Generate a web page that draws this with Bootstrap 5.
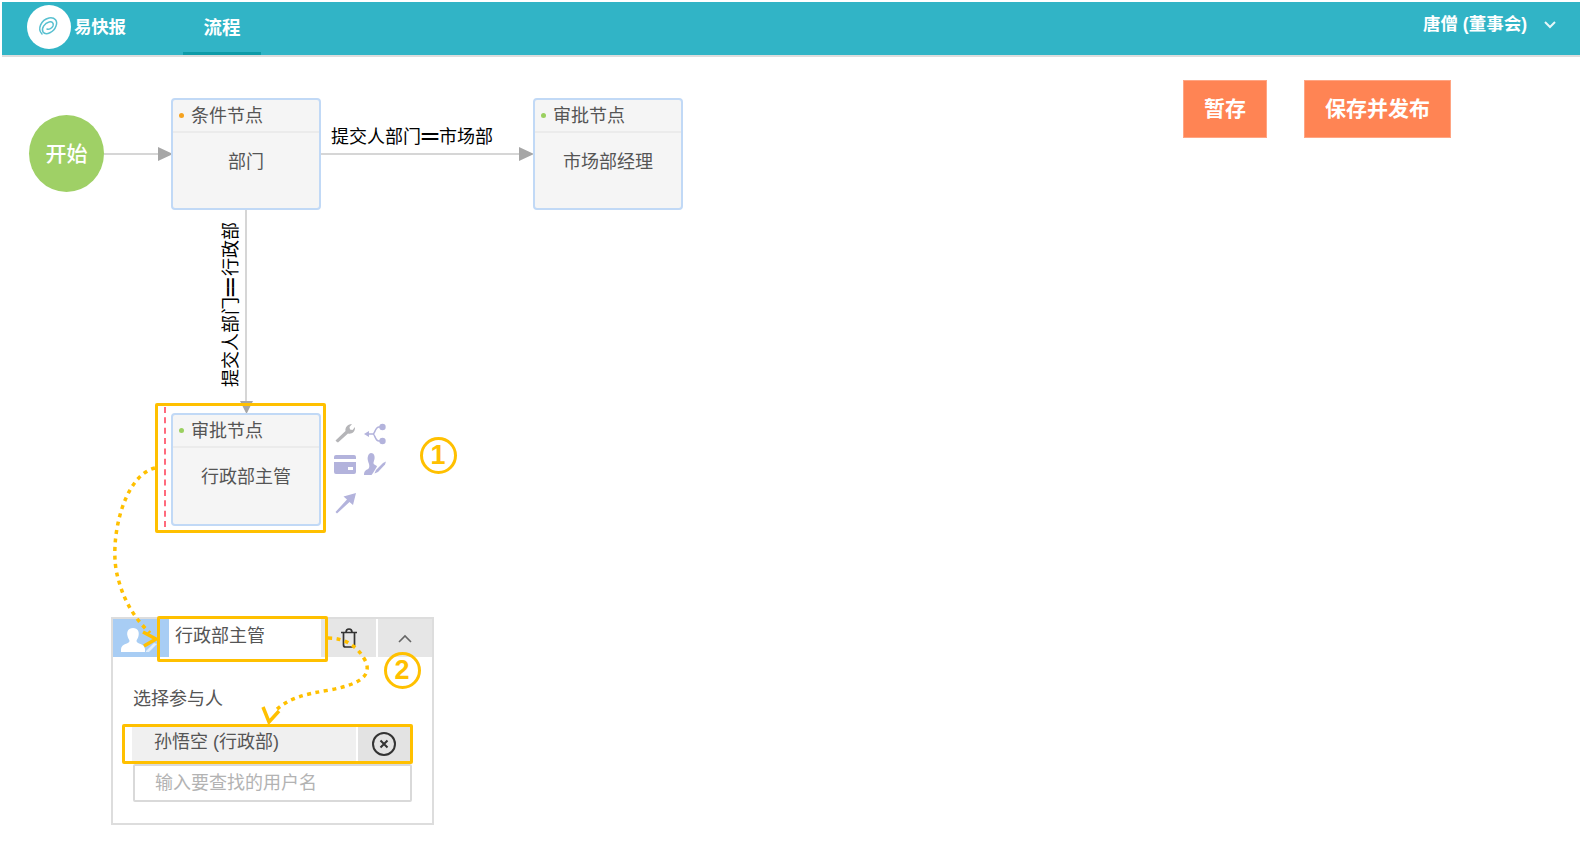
<!DOCTYPE html>
<html lang="zh">
<head>
<meta charset="utf-8">
<title>流程</title>
<link href="https://cdn.jsdelivr.net/npm/bootstrap@5.3.0/dist/css/bootstrap.min.css" rel="stylesheet">
<style>
html,body{height:100%;overflow:hidden}
body{background:#fff;color:#555;font-family:"Liberation Sans","Noto Sans CJK SC",sans-serif;font-size:18px}
.page-wrap{position:relative;width:1580px;height:844px;padding:2px 0 0 2px}
.topbar{height:55px;background:#31b4c6;border-bottom:2px solid #ddd;color:#fff;padding:0;flex-wrap:nowrap;align-items:stretch}
.logo-round{width:44px;height:44px;border-radius:50%;background:#fff;margin:3px 3px 0 25px}
.logo-word{font-size:17.5px;font-weight:700;line-height:51px;width:56px;letter-spacing:-.3px}
.nav-tab{width:78px;margin-left:53px;height:53px;line-height:52px;text-align:center;font-weight:700;font-size:18.5px;color:#fff;border-bottom:3px solid #0e9ba8}
.user-name{font-size:17.5px;font-weight:700;line-height:45px;margin-right:9px}
.user-caret{margin:19px 24px 0 8px}
.action-row{padding:23px 129px 0 0;gap:37px}
.action-btn{background:#ff8454;color:#fff;border:1px solid #ffa583;border-radius:0;height:58px;font-size:21px;font-weight:700;padding:0 20px;line-height:50px}
.wire-layer{position:absolute;left:0;top:0;width:1580px;height:844px;pointer-events:none}
.flow-node{position:absolute;width:150px;background:#f5f5f5;border:2px solid #c1d9f6;border-radius:4px}
.node-head{height:33px;border-bottom:2px solid #ebebeb;line-height:32px;padding-left:18px;position:relative;color:#555}
.node-dot{position:absolute;left:6px;top:13px;width:5px;height:5px;border-radius:50%}
.dot-orange{background:#f5a21e}
.dot-green{background:#9ad05f}
.node-body{text-align:center;line-height:26px;padding-top:16px;color:#555}
.start-dot{position:absolute;left:29px;top:115px;width:75px;height:77px;border-radius:50%;background:#9fd066;color:#fff;font-size:21px;font-weight:500}
.edge-text{position:absolute;color:#000;font-size:18px;line-height:24px;white-space:nowrap}
.edge-eq{letter-spacing:-3px;margin-inline-end:3px;font-weight:700}
.edge-h{left:331px;top:125px}
.edge-v{left:219px;top:222px;writing-mode:vertical-rl;text-orientation:sideways;transform:rotate(180deg)}
.edge-v .edge-eq{letter-spacing:-1.5px}
.mark-box{position:absolute;border:3px solid #ffc000;border-radius:2px;pointer-events:none}
.mark-one{left:155px;top:403px;width:171px;height:130px}
.mark-two{left:157px;top:616px;width:171px;height:46px}
.mark-three{left:122px;top:724px;width:291px;height:40px}
.red-rule{position:absolute;left:164px;top:407px;height:120px;border-left:2px dashed #ff6b7d}
.tool-icon{position:absolute}
.round-num{position:absolute;width:37px;height:37px;border:3px solid #ffc000;border-radius:50%;color:#ffc000;font-weight:700;font-size:27px;line-height:30px;text-align:center}
.prop-panel{position:absolute;left:111px;top:617px;width:323px;height:208px;border:2px solid #ddd;background:#fff}
.panel-head{height:38px}
.head-avatar{width:56px;background:#a8cdf4;padding:4px 0 0 6px}
.head-input{flex:1;background:#fff;font-size:18px;line-height:35px;padding-left:6px;color:#555}
.head-act{width:55px;background:#e6e6e6}
.head-act+.head-act{margin-left:2px}
.head-act-last{width:54px}
.panel-label{margin:0;padding:29px 0 0 20px;line-height:26px;color:#555}
.tag-row{margin:15px 22px 0 19px;height:34px;background:#f0f0f0}
.tag-name{flex:1;padding-left:22px;line-height:31px;color:#555}
.tag-close{width:54px;background:#e3e3e3;border-left:2px solid #fff}
.who-input.form-control{display:block;margin:3px 20px 0 20px;width:279px;height:38px;border:2px solid #d9d9d9;border-radius:2px;font-size:18px;padding:1px 20px 0;color:#555}
.who-input.form-control::placeholder{color:#b3b3b3;opacity:1}
</style>
</head>
<body>
<div class="page-wrap">
  <nav class="navbar topbar d-flex">
    <div class="logo-round d-flex align-items-center justify-content-center">
      <svg width="26" height="26" viewBox="0 0 26 26" fill="none" stroke="#58c0d0" stroke-width="1.5" stroke-linecap="round"><path d="M6 20C1 15 5 6 13 4c6-1 9 3 7 8-2 6-10 10-13 6-2-4 2-9 6-10 3-1 5 1 4 4-1 2-4 4-6 3"/></svg>
    </div>
    <span class="logo-word">易快报</span>
    <a class="nav-tab text-decoration-none">流程</a>
    <div class="ms-auto d-flex align-items-start">
      <span class="user-name">唐僧 (董事会)</span>
      <svg class="user-caret" width="12" height="8" viewBox="0 0 12 8" fill="none" stroke="#e6f7f9" stroke-width="2"><path d="M1 1l5 5 5-5"/></svg>
    </div>
  </nav>

  <div class="d-flex justify-content-end action-row">
    <button type="button" class="btn action-btn">暂存</button>
    <button type="button" class="btn action-btn">保存并发布</button>
  </div>

  <svg class="wire-layer" viewBox="0 0 1580 844" fill="none">
    <path d="M104 154H160M320 154H522M246 210V403" stroke="#d6d6d6" stroke-width="2"/>
    <path d="M158 147L173 154L158 161ZM519 147L534 154L519 161ZM240 401H253L246.500 414Z" fill="#a6a6a6"/>
  </svg>

  <div class="start-dot d-flex align-items-center justify-content-center">开始</div>

  <div class="flow-node" style="left:171px;top:98px;height:112px">
    <div class="node-head"><i class="node-dot dot-orange"></i>条件节点</div>
    <div class="node-body">部门</div>
  </div>
  <div class="flow-node" style="left:533px;top:98px;height:112px">
    <div class="node-head"><i class="node-dot dot-green"></i>审批节点</div>
    <div class="node-body">市场部经理</div>
  </div>
  <div class="flow-node" style="left:171px;top:413px;height:113px">
    <div class="node-head"><i class="node-dot dot-green"></i>审批节点</div>
    <div class="node-body">行政部主管</div>
  </div>

  <div class="edge-text edge-h">提交人部门<span class="edge-eq">==</span>市场部</div>
  <div class="edge-text edge-v">提交人部门<span class="edge-eq">==</span>行政部</div>

  <div class="red-rule"></div>

  <svg class="tool-icon" style="left:335px;top:423px" width="22" height="20" viewBox="0 0 22 20" fill="#b5b5b8"><path d="M2 19l-1.500-1.500L10.500 8C10 5 12 1 17 1l-2.500 3 .5 2.500 2.500.5L20 4c.5 5-3.500 7.500-7 6.500L3 19.500z"/></svg>
  <svg class="tool-icon" style="left:363px;top:423px" width="24" height="22" viewBox="0 0 24 22" fill="none"><path d="M5 11H10C12 11 12 4 16 4H18M10 11C12 11 12 18 16 18H18" stroke="#b3b3dc" stroke-width="1.500"/><path d="M1 11L6 8V14Z" fill="#b3b3dc"/><circle cx="19.500" cy="4" r="3.200" fill="#b3b3dc"/><circle cx="19.500" cy="18" r="3.200" fill="#b3b3dc"/></svg>
  <svg class="tool-icon" style="left:334px;top:455px" width="22" height="19" viewBox="0 0 22 19" fill="#b3b3dc"><path d="M2 0H20A2 2 0 0 1 22 2V4H0V2A2 2 0 0 1 2 0ZM0 7H22V17A2 2 0 0 1 20 19H2A2 2 0 0 1 0 17ZM14 12V15H19V12Z"/></svg>
  <svg class="tool-icon" style="left:364px;top:453px" width="23" height="22" viewBox="0 0 23 22" fill="#b3b3dc"><path d="M7 0c3 0 4 3 3.500 6-.5 2-1 3-1 4 0 2 3 2 3.500 3.500L9 20c-.5.8-1 1.500-1.500 2H0c0-4 2-5 4-6 1.500-.8 1.500-3 1-5C4 8 3 6 4 3c.5-2 2-3 3-3z"/><path d="M12 17l7-7 3-1.500-1 3-7 7.500-3.500 1.500z"/></svg>
  <svg class="tool-icon" style="left:335px;top:492px" width="22" height="22" viewBox="0 0 22 22" fill="#b3b3dc"><path d="M21 1L18 13L14.500 10L2 21.500L.5 20L12 7.500L8.500 4.500Z"/></svg>

  <div class="round-num" style="left:419.500px;top:436.500px">1</div>

  <section class="prop-panel">
    <div class="panel-head d-flex">
      <div class="head-avatar d-flex align-items-center">
        <svg width="40" height="26" viewBox="0 0 40 26" fill="#fff"><path d="M14 1c5 0 6.500 4 5.500 8-.5 2.500-2 3.500-2 5 0 3 8 2.500 8.500 8v3H2v-3c.5-5.500 8.500-5 8.500-8 0-1.500-1.500-2.500-2-5C7.500 5 9 1 14 1z"/><path d="M27 24l8-8 3 1-8 8h-3z" fill-opacity=".65"/></svg>
      </div>
      <div class="head-input">行政部主管</div>
      <div class="head-act d-flex align-items-center justify-content-center">
        <svg width="18" height="20" viewBox="0 0 18 20" fill="none" stroke="#333" stroke-width="1.700"><path d="M1 4.500H17M6 4.500C6 2 7 1 9 1S12 2 12 4.500M3.500 4.500V17C3.500 18.200 4.300 19 5.500 19H12.500C13.700 19 14.500 18.200 14.500 17V4.500"/></svg>
      </div>
      <div class="head-act head-act-last d-flex align-items-center justify-content-center">
        <svg width="14" height="9" viewBox="0 0 14 9" fill="none" stroke="#666" stroke-width="1.600"><path d="M1 8l6-6 6 6"/></svg>
      </div>
    </div>
    <p class="panel-label">选择参与人</p>
    <div class="tag-row d-flex">
      <div class="tag-name">孙悟空 (行政部)</div>
      <div class="tag-close d-flex align-items-center justify-content-center">
        <svg width="26" height="26" viewBox="0 0 26 26" fill="none" stroke="#333" stroke-width="2"><circle cx="13" cy="13" r="11"/><path d="M9.500 9.500l7 7M16.500 9.500l-7 7"/></svg>
      </div>
    </div>
    <input class="form-control who-input" type="text" placeholder="输入要查找的用户名">
  </section>

  <div class="mark-box mark-one"></div>
  <div class="mark-box mark-two"></div>
  <div class="mark-box mark-three"></div>
  <div class="round-num" style="left:383.500px;top:651.500px">2</div>

  <svg class="wire-layer" viewBox="0 0 1580 844" fill="none">
    <g stroke="#ffc000" stroke-width="3.500">
      <path stroke-dasharray="4 4.500" d="M155 468C122 476 108 545 118 578C124 602 136 620 150 633"/>
      <path d="M143 632L156 639L144 646"/>
      <path stroke-dasharray="4 4.500" d="M328 638C345 638 358 646 366 662C372 678 355 685 330 690C305 694 288 698 274 712"/>
      <path d="M263 707L269 722L279 711"/>
    </g>
  </svg>
</div>
</body>
</html>
